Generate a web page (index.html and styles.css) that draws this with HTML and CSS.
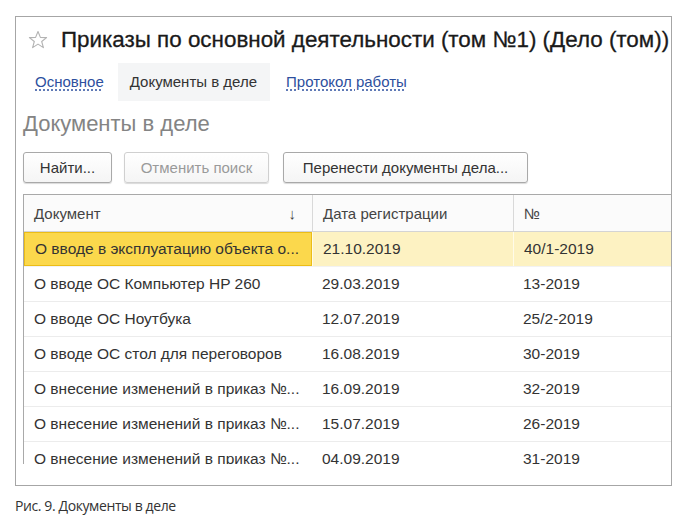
FILE: index.html
```html
<!DOCTYPE html>
<html lang="ru">
<head>
  <meta charset="UTF-8" />
  <title>Документы в деле</title>
  <link rel="stylesheet" href="styles.css">
</head>
<body>

  <div class="form-window">
    <div class="form-title">
      <svg class="star" width="20" height="20" viewBox="0 0 20 20">
        <path d="M10 1.5 L12.4 7.4 L18.6 7.6 L13.7 11.5 L15.4 17.6 L10 14.1 L4.6 17.6 L6.3 11.5 L1.4 7.6 L7.6 7.4 Z" fill="none" stroke="#b3b3b3" stroke-width="1.1" stroke-linejoin="round"/>
      </svg>
      <span>Приказы по основной деятельности (том №1) (Дело (том))</span>
    </div>

    <div class="tabs">
      <a href="#" class="tab">Основное</a>
      <span class="tab current">Документы в деле</span>
      <a href="#" class="tab">Протокол работы</a>
    </div>

    <div class="section-title">Документы в деле</div>

    <div class="toolbar">
      <button class="btn btn-find">Найти...</button>
      <button class="btn btn-cancel" disabled>Отменить поиск</button>
      <button class="btn btn-move">Перенести документы дела...</button>
    </div>

    <div class="grid">
      <div class="grid-row grid-head">
        <div class="cell col-doc">Документ <span class="sort">↓</span></div>
        <div class="cell col-date">Дата регистрации</div>
        <div class="cell col-num">№</div>
      </div>
      <div class="grid-row selected">
        <div class="cell col-doc">О вводе в эксплуатацию объекта о...</div>
        <div class="cell col-date">21.10.2019</div>
        <div class="cell col-num">40/1-2019</div>
      </div>
      <div class="grid-row">
        <div class="cell col-doc">О вводе ОС Компьютер HP 260</div>
        <div class="cell col-date">29.03.2019</div>
        <div class="cell col-num">13-2019</div>
      </div>
      <div class="grid-row">
        <div class="cell col-doc">О вводе ОС Ноутбука</div>
        <div class="cell col-date">12.07.2019</div>
        <div class="cell col-num">25/2-2019</div>
      </div>
      <div class="grid-row">
        <div class="cell col-doc">О вводе ОС стол для переговоров</div>
        <div class="cell col-date">16.08.2019</div>
        <div class="cell col-num">30-2019</div>
      </div>
      <div class="grid-row">
        <div class="cell col-doc">О внесение изменений в приказ №...</div>
        <div class="cell col-date">16.09.2019</div>
        <div class="cell col-num">32-2019</div>
      </div>
      <div class="grid-row">
        <div class="cell col-doc">О внесение изменений в приказ №...</div>
        <div class="cell col-date">15.07.2019</div>
        <div class="cell col-num">26-2019</div>
      </div>
      <div class="grid-row">
        <div class="cell col-doc">О внесение изменений в приказ №...</div>
        <div class="cell col-date">04.09.2019</div>
        <div class="cell col-num">31-2019</div>
      </div>
    </div>
  </div>

  <div class="caption">Рис. 9. Документы в деле</div>

</body>
</html>
```

FILE: styles.css
```css
* {
  box-sizing: border-box;
}

body {
  margin: 0;
  padding: 16px 0 0 15px;
  background: #fff;
  font-family: 'Liberation Sans', Arial, sans-serif;
  color: #333;
}

.form-window {
  width: 657px;
  height: 470px;
  border: 1px solid #a6a6a6;
  padding: 0 0 0 7px;
  overflow: hidden;
}

.form-title {
  display: flex;
  align-items: center;
  height: 30px;
  margin-top: 8px;
  padding-left: 5px;
  font-size: 22.4px;
  color: #1a1a1a;
  white-space: nowrap;
  -webkit-text-stroke: 0.3px #1a1a1a;
}

.star {
  margin-right: 13px;
  flex-shrink: 0;
}

.tabs {
  display: flex;
  align-items: center;
  height: 38px;
  margin-top: 8px;
  padding-left: 5px;
  font-size: 15px;
}

.tab {
  padding: 0 7px;
  line-height: 38px;
  color: #2d4f9e;
  white-space: nowrap;
}

a.tab {
  text-decoration: underline dotted #2d4f9e;
  text-underline-offset: 3px;
}

.tab.current {
  background: #f4f5f6;
  color: #333;
  padding: 0 13px 0 12px;
  margin: 0 9px 0 7px;
}

.section-title {
  margin-top: 10px;
  height: 26px;
  line-height: 26px;
  font-size: 22px;
  color: #848484;
}

.toolbar {
  display: flex;
  gap: 12px;
  margin-top: 15px;
}

.btn {
  height: 31px;
  padding: 0 8px;
  font-family: inherit;
  font-size: 15px;
  color: #333;
  white-space: nowrap;
  background: linear-gradient(#fff, #f5f5f5);
  border: 1px solid #a9a9a9;
  border-radius: 3px;
  box-shadow: 0 1px 1px rgba(0, 0, 0, 0.15);
}

.btn-find {
  width: 89px;
}

.btn-cancel {
  width: 145px;
  color: #9a9a9a;
  border-color: #d0d0d0;
}

.btn-move {
  width: 245px;
  margin-left: 2px;
}

.grid {
  margin-top: 11px;
  border-top: 1px solid #a9a9a9;
  border-left: 1px solid #a9a9a9;
  height: 270px;
  overflow: hidden;
  width: 660px;
  font-size: 15.5px;
}

.grid-row {
  display: flex;
  height: 35px;
  border-bottom: 1px solid #ececec;
}

.cell {
  display: flex;
  align-items: center;
  padding: 0 10px;
  white-space: nowrap;
}

.col-doc {
  width: 288px;
}

.col-date {
  width: 201px;
}

.col-num {
  flex: 1;
}

.grid-head {
  height: 37px;
  background: #fbfbfb;
  border-bottom: 1px solid #d4d4d4;
  color: #444;
  font-size: 15px;
}

.grid-head .cell + .cell {
  border-left: 1px solid #d9d9d9;
}

.sort {
  margin-left: auto;
  margin-right: 6px;
  font-size: 15px;
}

.selected {
  background: #fdf2c2;
  border-bottom-color: #f2f2f2;
}

.selected .cell + .cell {
  border-left: 1px solid #fffbe8;
}

.selected .col-doc {
  background: #fbd84c;
  border: 1px solid #ecbd16;
}

.caption {
  margin-top: 10px;
  font-family: 'Open Sans', sans-serif;
  font-size: 14px;
  color: #333;
  letter-spacing: -0.4px;
}
```
